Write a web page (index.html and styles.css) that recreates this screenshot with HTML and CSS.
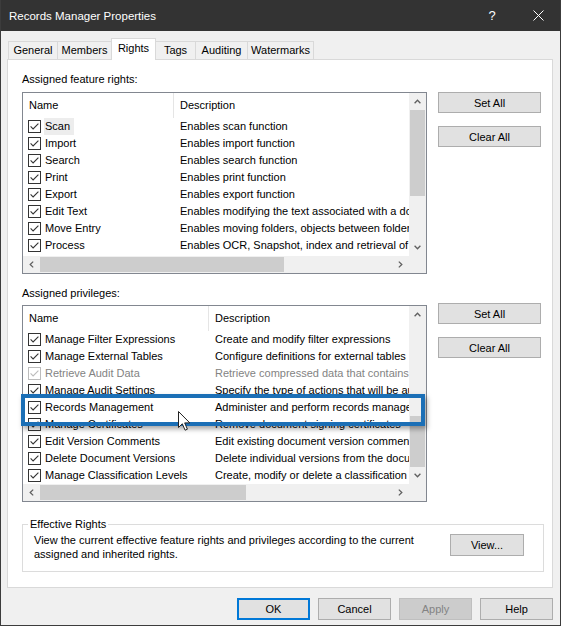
FILE: index.html
```html
<!DOCTYPE html>
<html>
<head>
<meta charset="utf-8">
<title>Records Manager Properties</title>
<link rel="stylesheet" href="styles.css">
</head>
<body>
<svg class="defs" width="0" height="0">
  <symbol id="chk" viewBox="0 0 13 13">
    <rect x="0.5" y="0.5" width="12" height="12" fill="#fff" stroke="#333"/>
    <path d="M2.6 6.4 L5.1 8.9 L10.4 3.6" fill="none" stroke="#333" stroke-width="1.1"/>
  </symbol>
  <symbol id="chk-dis" viewBox="0 0 13 13">
    <rect x="0.5" y="0.5" width="12" height="12" fill="#fff" stroke="#bcbcbc"/>
    <path d="M2.6 6.4 L5.1 8.9 L10.4 3.6" fill="none" stroke="#bcbcbc" stroke-width="1.1"/>
  </symbol>
  <symbol id="ar-up" viewBox="0 0 7 5"><path d="M0.6 4.2 L3.5 1.2 L6.4 4.2" fill="none" stroke="#606060" stroke-width="1.3"/></symbol>
  <symbol id="ar-down" viewBox="0 0 7 5"><path d="M0.6 0.8 L3.5 3.8 L6.4 0.8" fill="none" stroke="#606060" stroke-width="1.3"/></symbol>
  <symbol id="ar-left" viewBox="0 0 5 7"><path d="M4.2 0.6 L1.2 3.5 L4.2 6.4" fill="none" stroke="#606060" stroke-width="1.3"/></symbol>
  <symbol id="ar-right" viewBox="0 0 5 7"><path d="M0.8 0.6 L3.8 3.5 L0.8 6.4" fill="none" stroke="#606060" stroke-width="1.3"/></symbol>
</svg>
<div class="window">
  <div class="titlebar">
    <span class="title">Records Manager Properties</span>
    <span class="cap-btn help">?</span>
    <span class="cap-btn close"><svg width="11" height="11" viewBox="0 0 11 11"><path d="M0.5 0.5L10.5 10.5M10.5 0.5L0.5 10.5" stroke="#fff" stroke-width="1"/></svg></span>
  </div>
  <div class="client">
    <div class="tabs">
      <div class="tab t-general">General</div>
      <div class="tab t-members">Members</div>
      <div class="tab t-rights active">Rights</div>
      <div class="tab t-tags">Tags</div>
      <div class="tab t-auditing">Auditing</div>
      <div class="tab t-watermarks">Watermarks</div>
    </div>
    <div class="panel">
      <div class="label label-first">Assigned feature rights:</div>
      <div class="section">
        <div class="listview lv-features">
          <div class="lv-content">
            <div class="lv-header"><div class="col-name">Name</div><div class="col-desc">Description</div></div>
            <div class="row"><div class="col-name"><svg class="cb"><use href="#chk"/></svg><span class="focus">Scan</span></div><div class="col-desc">Enables scan function</div></div>
            <div class="row"><div class="col-name"><svg class="cb"><use href="#chk"/></svg><span>Import</span></div><div class="col-desc">Enables import function</div></div>
            <div class="row"><div class="col-name"><svg class="cb"><use href="#chk"/></svg><span>Search</span></div><div class="col-desc">Enables search function</div></div>
            <div class="row"><div class="col-name"><svg class="cb"><use href="#chk"/></svg><span>Print</span></div><div class="col-desc">Enables print function</div></div>
            <div class="row"><div class="col-name"><svg class="cb"><use href="#chk"/></svg><span>Export</span></div><div class="col-desc">Enables export function</div></div>
            <div class="row"><div class="col-name"><svg class="cb"><use href="#chk"/></svg><span>Edit Text</span></div><div class="col-desc">Enables modifying the text associated with a document</div></div>
            <div class="row"><div class="col-name"><svg class="cb"><use href="#chk"/></svg><span>Move Entry</span></div><div class="col-desc">Enables moving folders, objects between folders</div></div>
            <div class="row"><div class="col-name"><svg class="cb"><use href="#chk"/></svg><span>Process</span></div><div class="col-desc">Enables OCR, Snapshot, index and retrieval of text</div></div>
            <div class="row"><div class="col-name"><svg class="cb"><use href="#chk"/></svg><span>Annotate</span></div><div class="col-desc">Enables annotation function</div></div>
          </div>
          <div class="vscroll">
            <div class="sb-arrow"><svg class="ar-v"><use href="#ar-up"/></svg></div>
            <div class="thumb-v thumb-features"></div>
            <div class="sb-track"></div>
            <div class="sb-arrow"><svg class="ar-v"><use href="#ar-down"/></svg></div>
          </div>
          <div class="hscroll">
            <div class="sb-arrow"><svg class="ar-h"><use href="#ar-left"/></svg></div>
            <div class="thumb-h thumb-h-features"></div>
            <div class="sb-track"></div>
            <div class="sb-arrow"><svg class="ar-h"><use href="#ar-right"/></svg></div>
          </div>
          <div class="corner"></div>
        </div>
        <div class="side">
          <button class="btn side-btn">Set All</button>
          <button class="btn side-btn">Clear All</button>
        </div>
      </div>

      <div class="label label-second">Assigned privileges:</div>
      <div class="section">
        <div class="listview lv-privs">
          <div class="lv-content">
            <div class="lv-header"><div class="col-name">Name</div><div class="col-desc">Description</div></div>
            <div class="row"><div class="col-name"><svg class="cb"><use href="#chk"/></svg><span>Manage Filter Expressions</span></div><div class="col-desc">Create and modify filter expressions</div></div>
            <div class="row"><div class="col-name"><svg class="cb"><use href="#chk"/></svg><span>Manage External Tables</span></div><div class="col-desc">Configure definitions for external tables</div></div>
            <div class="row disabled"><div class="col-name"><svg class="cb"><use href="#chk-dis"/></svg><span>Retrieve Audit Data</span></div><div class="col-desc">Retrieve compressed data that contains audit information</div></div>
            <div class="row"><div class="col-name"><svg class="cb"><use href="#chk"/></svg><span>Manage Audit Settings</span></div><div class="col-desc">Specify the type of actions that will be audited</div></div>
            <div class="row"><div class="col-name"><svg class="cb"><use href="#chk"/></svg><span>Records Management</span></div><div class="col-desc">Administer and perform records management</div></div>
            <div class="row"><div class="col-name"><svg class="cb"><use href="#chk"/></svg><span>Manage Certificates</span></div><div class="col-desc">Remove document signing certificates</div></div>
            <div class="row"><div class="col-name"><svg class="cb"><use href="#chk"/></svg><span>Edit Version Comments</span></div><div class="col-desc">Edit existing document version comments</div></div>
            <div class="row"><div class="col-name"><svg class="cb"><use href="#chk"/></svg><span>Delete Document Versions</span></div><div class="col-desc">Delete individual versions from the document</div></div>
            <div class="row"><div class="col-name"><svg class="cb"><use href="#chk"/></svg><span>Manage Classification Levels</span></div><div class="col-desc">Create, modify or delete a classification level</div></div>
          </div>
          <div class="vscroll">
            <div class="sb-arrow"><svg class="ar-v"><use href="#ar-up"/></svg></div>
            <div class="sb-track"></div>
            <div class="thumb-v thumb-privs"></div>
            <div class="sb-arrow"><svg class="ar-v"><use href="#ar-down"/></svg></div>
          </div>
          <div class="hscroll">
            <div class="sb-arrow"><svg class="ar-h"><use href="#ar-left"/></svg></div>
            <div class="thumb-h thumb-h-privs"></div>
            <div class="sb-track"></div>
            <div class="sb-arrow"><svg class="ar-h"><use href="#ar-right"/></svg></div>
          </div>
          <div class="corner"></div>
        </div>
        <div class="side side-second">
          <button class="btn side-btn">Set All</button>
          <button class="btn side-btn">Clear All</button>
        </div>
      </div>

      <fieldset class="group">
        <legend>Effective Rights</legend>
        <div class="group-body">
          <p class="group-text">View the current effective feature rights and privileges according to the current<br>assigned and inherited rights.</p>
          <button class="btn view-btn">View...</button>
        </div>
      </fieldset>
    </div>
    <div class="dialog-buttons">
      <button class="btn dlg-btn default">OK</button>
      <button class="btn dlg-btn">Cancel</button>
      <button class="btn dlg-btn" disabled>Apply</button>
      <button class="btn dlg-btn">Help</button>
    </div>
  </div>
  <div class="annotation"></div>
  <svg class="cursor" width="13" height="20" viewBox="0 0 13 20"><path d="M0.5 0.5 L0.5 16.5 L4.3 12.8 L7.1 19.2 L9.4 18.2 L6.7 11.9 L11.8 11.9 Z" fill="#fff" stroke="#222" stroke-width="1" stroke-linejoin="round"/></svg>
</div>
</body>
</html>
```

FILE: styles.css
```css
* { box-sizing: border-box; }
html, body { margin: 0; padding: 0; }
body {
  background: #f0f0f0;
  font-family: "Liberation Sans", Arial, sans-serif;
  font-size: 11px;
  color: #000;
}
.defs { position: absolute; width: 0; height: 0; overflow: hidden; }

.window {
  position: relative;
  width: 561px;
  height: 626px;
  border: 1px solid #3c3c3c;
  border-top: 0;
  background: #f0f0f0;
  display: flex;
  flex-direction: column;
  overflow: hidden;
}

.titlebar {
  height: 31px;
  flex: none;
  background: #333333;
  color: #fff;
  display: flex;
  align-items: center;
  padding-left: 9px;
  margin: 0 -1px;
}
.title { flex: 1; font-size: 11.5px; }
.cap-btn {
  width: 46px;
  height: 31px;
  display: flex;
  align-items: center;
  justify-content: center;
}
.help { font-size: 13px; }
.close svg { display: block; }

.client {
  flex: 1;
  display: flex;
  flex-direction: column;
  padding: 7px 7px 0 6px;
}

.tabs {
  display: flex;
  align-items: flex-end;
  height: 21px;
  margin-left: 1px;
  position: relative;
  z-index: 1;
}
.tab {
  height: 18px;
  line-height: 17px;
  text-align: center;
  border: 1px solid #d9d9d9;
  border-bottom: 0;
  margin-right: -1px;
  background: #f0f0f0;
  white-space: nowrap;
}
.tab.active {
  height: 22px;
  line-height: 19px;
  margin-bottom: -1px;
  background: #fff;
  position: relative;
  z-index: 2;
}
.t-general { width: 50px; }
.t-members { width: 55px; }
.t-rights { width: 45px; }
.t-tags { width: 41px; }
.t-auditing { width: 53px; }
.t-watermarks { width: 67px; }

.panel {
  height: 529px;
  flex: none;
  background: #fff;
  border: 1px solid #d9d9d9;
  padding: 12px 8px 0 14px;
}

.label { line-height: 15px; height: 15px; }
.label-first { margin-bottom: 5px; }
.label-second { margin-top: 12px; margin-bottom: 4px; }

.section {
  display: flex;
  align-items: flex-start;
  gap: 11px;
}

.listview {
  width: 405px;
  border: 1px solid #828790;
  background: #fff;
  display: grid;
  grid-template-columns: 386px 17px;
  grid-template-rows: 1fr 17px;
}
.lv-features { height: 182px; --name-w: 151px; }
.lv-privs { height: 197px; --name-w: 186px; }

.lv-content {
  grid-row: 1;
  grid-column: 1;
  overflow: hidden;
  min-height: 0;
}
.lv-header {
  display: flex;
  height: 25px;
  line-height: 24px;
}
.lv-header .col-name {
  width: var(--name-w);
  flex: none;
  padding-left: 6px;
  border-right: 1px solid #e5e5e5;
}
.lv-header .col-desc { padding-left: 6px; }

.row {
  display: flex;
  height: 17px;
  line-height: 17px;
  white-space: nowrap;
}
.row .col-name {
  width: var(--name-w);
  flex: none;
  display: flex;
  align-items: center;
  gap: 4px;
  padding-left: 5px;
  overflow: hidden;
}
.row .col-desc {
  flex: 1;
  min-width: 0;
  padding-left: 6px;
  overflow: hidden;
}
.row.disabled { color: #838383; }
.cb { width: 13px; height: 13px; flex: none; display: block; }
.focus {
  background: #ededed;
  height: 17px;
  margin-left: -1px;
  padding: 0 4px 0 1px;
}

.vscroll {
  grid-row: 1;
  grid-column: 2;
  background: #f0f0f0;
  display: flex;
  flex-direction: column;
  min-height: 0;
}
.hscroll {
  grid-row: 2;
  grid-column: 1;
  background: #f0f0f0;
  display: flex;
}
.corner {
  grid-row: 2;
  grid-column: 2;
  background: #f0f0f0;
}
.sb-arrow {
  width: 17px;
  height: 17px;
  flex: none;
  display: flex;
  align-items: center;
  justify-content: center;
}
.ar-v { width: 7px; height: 5px; display: block; }
.ar-h { width: 5px; height: 7px; display: block; }
.sb-track { flex: 1; }
.thumb-v { flex: none; background: #cdcdcd; margin: 0 1px; }
.thumb-features { height: 86px; }
.thumb-privs { height: 51px; }
.thumb-h { flex: none; background: #cdcdcd; margin: 1px 0; }
.thumb-h-features { width: 244px; }
.thumb-h-privs { width: 206px; }

.btn {
  font-family: "Liberation Sans", Arial, sans-serif;
  font-size: 11px;
  color: #000;
  background: #e1e1e1;
  border: 1px solid #adadad;
  padding: 0;
  margin: 0;
}
.side {
  display: flex;
  flex-direction: column;
  gap: 13px;
  width: 103px;
}
.side-second { margin-top: -2px; }
.side-btn { height: 21px; width: 103px; }

.group {
  margin: 15px 0 0 0;
  padding: 0 0 10px 11px;
  border: 1px solid #dcdcdc;
  min-width: 0;
}
.group legend {
  margin-left: -6px;
  padding: 0 2px;
  line-height: 15px;
}
.group-body {
  display: flex;
  align-items: flex-start;
  padding-top: 1px;
}
.group-text {
  flex: 1;
  margin: 0;
  line-height: 14px;
}
.view-btn {
  width: 74px;
  height: 22px;
  margin: 1px 19px 0 0;
}

.dialog-buttons {
  display: flex;
  justify-content: flex-end;
  gap: 8px;
  margin-top: 10px;
}
.dlg-btn { width: 73px; height: 22px; }
.dlg-btn.default { border: 2px solid #0078d7; }
.dlg-btn:disabled {
  background: #cccccc;
  border-color: #bfbfbf;
  color: #838383;
}

.annotation {
  position: absolute;
  left: 20px;
  top: 394px;
  width: 404px;
  height: 32px;
  border: 4px solid #1b6fb6;
  box-shadow: 2px 3px 5px rgba(0, 0, 0, 0.35);
  pointer-events: none;
}
.cursor {
  position: absolute;
  left: 177px;
  top: 411px;
}
```
